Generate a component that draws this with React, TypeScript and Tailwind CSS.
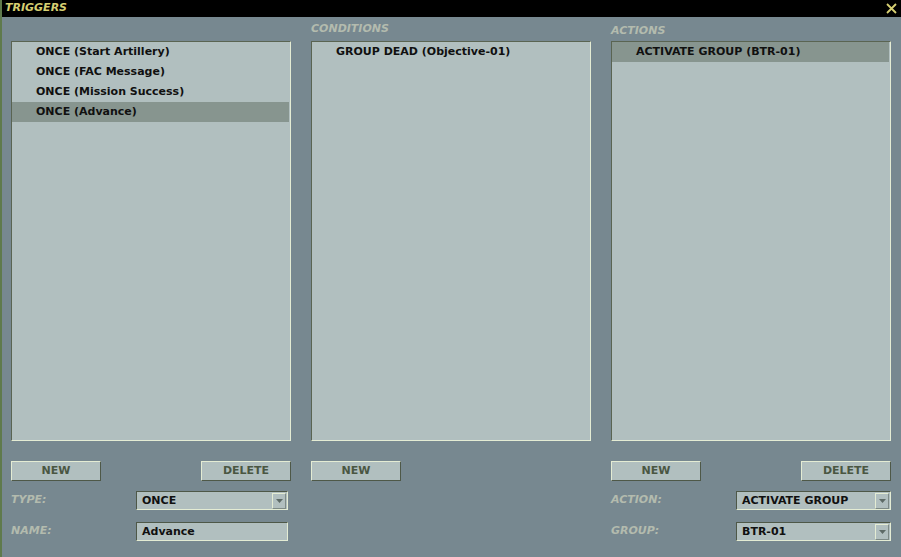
import React from "react";

const font = { fontFamily: '"DejaVu Sans", "Liberation Sans", sans-serif' };

function ListBox({ items, selected }: { items: string[]; selected: number }) {
  return (
    <div className="h-[400px] w-[280px] bg-[#b1bfbf] border-t border-l border-t-[#5a6452] border-l-[#5a6452] border-b border-r border-b-[#e4ecd4] border-r-[#e4ecd4]">
      {items.map((it, i) => (
        <div
          key={it}
          className={`h-[20px] w-[277px] pl-[24px] leading-[20px] text-[11px] font-bold text-[#101010] ${
            i === selected ? "bg-[#87958f]" : ""
          }`}
        >
          {it}
        </div>
      ))}
    </div>
  );
}

function Btn({ label }: { label: string }) {
  return (
    <div className="h-[20px] w-[90px] bg-[#b1bfbf] border-t border-l border-t-[#e4ecd4] border-l-[#e4ecd4] border-b border-r border-b-[#4e5848] border-r-[#4e5848] flex items-center justify-center text-[11px] font-bold text-[#4a5642]">
      {label}
    </div>
  );
}

function Select({ value, w, arrow = true }: { value: string; w: string; arrow?: boolean }) {
  return (
    <div
      className={`${w} h-[19px] bg-[#b1bfbf] border-t border-l border-t-[#4e5848] border-l-[#4e5848] border-b border-r border-b-[#e4ecd4] border-r-[#e4ecd4] flex items-center`}
    >
      <div className="flex-1 pl-[5px] text-[11px] font-bold text-[#101010] leading-none">{value}</div>
      {arrow && (
        <div className="w-[14px] h-[16px] bg-[#b1bfbf] border-t border-l border-t-[#e4ecd4] border-l-[#e4ecd4] border-b border-r border-b-[#7d8a86] border-r-[#7d8a86] flex items-center justify-center mr-px">
          <svg width="7" height="4" viewBox="0 0 7 4">
            <path d="M0 0h7L3.5 4z" fill="#5d6a66" />
          </svg>
        </div>
      )}
    </div>
  );
}

function Label({ text }: { text: string }) {
  return <div className="text-[11px] font-bold italic text-[#b3bbae]">{text}</div>;
}

export default function App() {
  return (
    <div className="w-[901px] h-[557px] flex overflow-hidden" style={font}>
      <div className="w-[2px] h-full bg-[#5f7a4c]" />
      <div className="flex-1 flex flex-col bg-[#778890]">
        <div className="h-[17px] bg-black flex items-center justify-between pl-[3px] pr-[4px]">
          <div className="text-[11px] font-bold italic text-[#d6cf72]">TRIGGERS</div>
          <svg width="11" height="11" viewBox="0 0 11 11">
            <path d="M1 1l9 9M10 1l-9 9" stroke="#d6cf72" strokeWidth="1.8" />
          </svg>
        </div>
        <div className="flex pl-[9px] gap-[20px]">
          {/* triggers column */}
          <div className="w-[280px] flex flex-col">
            <div className="h-[24px]" />
            <ListBox
              items={["ONCE (Start Artillery)", "ONCE (FAC Message)", "ONCE (Mission Success)", "ONCE (Advance)"]}
              selected={3}
            />
            <div className="flex justify-between mt-[20px]">
              <Btn label="NEW" />
              <Btn label="DELETE" />
            </div>
            <div className="flex items-center justify-between mt-[10px] pr-[3px]">
              <Label text="TYPE:" />
              <Select value="ONCE" w="w-[152px]" />
            </div>
            <div className="flex items-center justify-between mt-[12px] pr-[3px]">
              <Label text="NAME:" />
              <Select value="Advance" w="w-[152px]" arrow={false} />
            </div>
          </div>
          {/* conditions column */}
          <div className="w-[280px] flex flex-col">
            <div className="h-[24px] pt-[4px]">
              <Label text="CONDITIONS" />
            </div>
            <ListBox items={["GROUP DEAD (Objective-01)"]} selected={-1} />
            <div className="flex mt-[20px]">
              <Btn label="NEW" />
            </div>
          </div>
          {/* actions column */}
          <div className="w-[280px] flex flex-col">
            <div className="h-[24px] pt-[6px]">
              <Label text="ACTIONS" />
            </div>
            <ListBox items={["ACTIVATE GROUP (BTR-01)"]} selected={0} />
            <div className="flex justify-between mt-[20px]">
              <Btn label="NEW" />
              <Btn label="DELETE" />
            </div>
            <div className="flex items-center justify-between mt-[10px]">
              <Label text="ACTION:" />
              <Select value="ACTIVATE GROUP" w="w-[155px]" />
            </div>
            <div className="flex items-center justify-between mt-[12px]">
              <Label text="GROUP:" />
              <Select value="BTR-01" w="w-[155px]" />
            </div>
          </div>
        </div>
      </div>
    </div>
  );
}
